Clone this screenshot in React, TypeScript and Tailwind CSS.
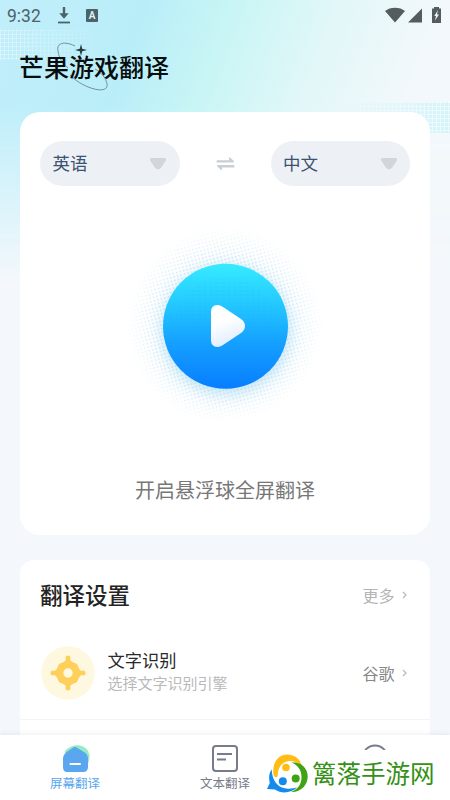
import React from "react";

function StatusBar() {
  return (
    <div className="flex h-[30px] shrink-0 items-center justify-between pt-px pl-[7px] pr-[8px] text-[#4d626a]">
      <div className="flex items-center">
        <span className="w-[50px] font-[Roboto,sans-serif] text-[17.5px] leading-[20px]">9:32</span>
        <svg width="14" height="17" viewBox="0 0 14 17" fill="none" stroke="currentColor">
          <path d="M7 0V10" strokeWidth="2.4" />
          <path d="M2.3 6.2L7 11.7L11.7 6.2Z" fill="currentColor" stroke="none" />
          <path d="M1 15.5H13" strokeWidth="1.8" />
        </svg>
        <span className="ml-[15px] flex h-[13px] w-[12px] items-center justify-center rounded-[1px] bg-[#4d626a] font-[Roboto,sans-serif] text-[10px] font-bold leading-[12px] text-[#d5f4f8]">A</span>
      </div>
      <svg width="57" height="17" viewBox="0 0 57 17" fill="#555c60">
        <path d="M0 4C5-.5 15-.5 20 4L10 15.5Z" />
        <path d="M23 15.5H37V1.5Z" />
        <path d="M49 0h5v1.5h2V16h-9V1.5h2Z" />
        <path d="M53 3L49.3 9H51L50 13.5L54 7.6H52Z" fill="#edfafa" />
      </svg>
    </div>
  );
}

function Caret() {
  return (
    <svg width="18" height="13" viewBox="0 0 18 13" fill="#d0d6da">
      <path d="M3 1H15Q18 1 16.7 3.7L12 10.7Q9 14 6 10.7L1.3 3.7Q0 1 3 1Z" />
    </svg>
  );
}

function Language({ name }: { name: string }) {
  return (
    <button className="flex h-[45px] w-[139.5px] items-center justify-between rounded-full bg-[#edf0f4] pl-[12.5px] pr-[12.5px] text-[17.5px] text-[#3b5270]">
      <span>{name}</span>
      <Caret />
    </button>
  );
}

function PlayButton() {
  return (
    <svg className="block" width="200" height="200" viewBox="0 0 200 200">
      <defs>
        <linearGradient id="disc" x1="0" y1="0" x2="0" y2="1">
          <stop stopColor="#36ebff" />
          <stop offset=".3" stopColor="#25cbff" />
          <stop offset=".65" stopColor="#149eff" />
          <stop offset="1" stopColor="#087eff" />
        </linearGradient>
        <linearGradient id="tri" x1="0" y1="0" x2=".3" y2="1">
          <stop offset=".45" stopColor="#fff" />
          <stop offset="1" stopColor="#e1edff" />
        </linearGradient>
        <radialGradient id="fade">
          <stop offset=".6" stopColor="#fff" />
          <stop offset=".8" stopColor="#fff" stopOpacity=".55" />
          <stop offset="1" stopColor="#fff" stopOpacity="0" />
        </radialGradient>
        <pattern id="dots" width="3.6" height="3.6" patternUnits="userSpaceOnUse" patternTransform="rotate(-15)">
          <circle cx="1.6" cy="1.6" r=".9" fill="#c0e2f1" />
        </pattern>
        <pattern id="grain" width="6" height="4" patternUnits="userSpaceOnUse">
          <path d="M0 2H4" stroke="#087ce5" strokeOpacity=".13" strokeWidth=".8" />
        </pattern>
        <mask id="halo"><circle cx="100" cy="100" r="99" fill="url(#fade)" /></mask>
        <filter id="glow" x="-40%" y="-40%" width="180%" height="180%"><feGaussianBlur stdDeviation="8" /></filter>
      </defs>
      <circle cx="100" cy="100" r="99" fill="url(#dots)" mask="url(#halo)" />
      <circle cx="101" cy="105" r="64" fill="#82caee" opacity=".5" filter="url(#glow)" />
      <circle cx="100.5" cy="101.3" r="62.5" fill="url(#disc)" />
      <circle cx="100.5" cy="101" r="50" fill="url(#grain)" />
      <path d="M86 87Q86 80 92.5 80Q95 80 98 82L116 94Q120 97 120 101Q120 105 116 108L98 120Q95 122 92.5 122Q86 122 86 115Z" fill="url(#tri)" />
    </svg>
  );
}

function Chevron() {
  return (
    <svg width="5" height="8" viewBox="0 0 5 8" fill="none" stroke="#bbb" strokeWidth="1.3"><path d="M1 1L4 4L1 7" /></svg>
  );
}

function TargetIcon() {
  return (
    <svg width="54" height="54" viewBox="0 0 54 54">
      <circle cx="27" cy="27" r="26.8" fill="#fff8e0" />
      <g fill="#ffcf5b">
        <path d="M25.5 12H28.5Q29 15.500 34 17Q36.500 17.500 37 20Q38.500 25 42 25.500V28.500Q38.500 29 37 34Q36.500 36.500 34 37Q29 38.500 28.500 42H25.500Q25 38.500 20 37Q17.500 36.500 17 34Q15.500 29 12 28.500V25.500Q15.500 25 17 20Q17.500 17.500 20 17Q25 15.500 25.500 12Z" />
        <circle cx="27" cy="12" r="2.5" /><circle cx="27" cy="42" r="2.5" /><circle cx="12" cy="27" r="2.5" /><circle cx="42" cy="27" r="2.5" />
      </g>
      <circle cx="27" cy="27" r="4.700" fill="#fff9df" />
    </svg>
  );
}

function Brand() {
  return (
    <div className="absolute left-[266px] top-[750px] flex h-[47px] w-[177px] items-center bg-white">
      <svg width="43" height="41" viewBox="0 0 43 41">
        <path d="M7.5 21.5C6 10 12 1.5 21 1.5C28.500 1.500 34.500 6 35.700 13C31 9.500 27.500 7.500 23 8C16 9 12 14 11.700 22.500C11.500 25 8 25 7.500 21.500Z" fill="#ffbd16" />
        <path d="M25.500 9.500C34 8.500 41.500 14 41.700 23C42 32 35 39.500 25 39C32 36 35.500 31.500 35.500 24C35.500 16.500 31.500 12 25.500 9.500Z" fill="#40a313" />
        <path d="M5.700 16.500C6 26 10.500 34.500 20 35.500C24 36 27.500 35.500 31 34.500C26 39.500 16 41.500 9 36.500L1 36L3.800 30C2.500 25 3 20 5.700 16.500Z" fill="#128bed" />
        <circle cx="20" cy="14.500" r="3.800" fill="#ffbd16" />
        <circle cx="16.800" cy="28.300" r="4" fill="#128bed" />
        <circle cx="29.700" cy="25.500" r="4" fill="#40a313" />
      </svg>
      <span className="ml-[3px] whitespace-nowrap text-[24.5px] leading-none text-[#359016]">篱落手游网</span>
    </div>
  );
}

function BottomNav() {
  return (
    <nav className="relative grid h-[65px] shrink-0 grid-cols-3 bg-white text-[12.5px] text-[#777b8a] shadow-[0_-1px_5px_rgba(50,70,90,0.09)]">
      <div className="flex flex-col items-center pt-[9px] text-[#58a5ee]">
        <svg width="30" height="29" viewBox="0 0 30 29">
          <path d="M4.500 8C8 3 14 .5 20 1.500Q28 3 29.500 11Q30 16 27 22L17 18Z" fill="#94ecc2" />
          <path d="M12.500 4Q15 2 17.500 4L25.500 9Q28 11 28 14V23Q28 28 23 28H7Q3 28 3 23V14Q3 11 6 8.500Z" fill="#5aa7ef" />
          <path d="M10.500 20H20" stroke="white" strokeWidth="2" strokeLinecap="round" />
        </svg>
        <span className="mt-px leading-[18px]">屏幕翻译</span>
      </div>
      <div className="flex flex-col items-center pt-[9px]">
        <svg width="28" height="29" viewBox="0 0 28 29" fill="none" stroke="currentColor" strokeWidth="2">
          <rect x="2" y="2" width="24" height="25" rx="3" /><path d="M6 10H21M6 15.500H15" />
        </svg>
        <span className="mt-px leading-[18px]">文本翻译</span>
      </div>
      <div className="flex justify-center pt-[9px]">
        <svg width="28" height="28" viewBox="0 0 28 28" fill="none" stroke="currentColor" strokeWidth="2"><circle cx="14" cy="14" r="12.5" /></svg>
      </div>
    </nav>
  );
}

export default function App() {
  return (
    <main className="relative flex h-[800px] w-[450px] flex-col overflow-hidden bg-[#f4f8fc] font-['Noto_Sans_CJK_SC',sans-serif]">
      <div className="absolute inset-x-0 top-0 h-[280px] bg-[linear-gradient(110deg,#c1eefb_0%,#b9eef8_27%,#c8f5f5_42%,#e2f7f8_62%,#f2f8fb_80%)] [mask-image:linear-gradient(#000_38%,transparent)]" />
      <div className="absolute left-0 top-[30px] h-[30px] w-[110px] bg-[linear-gradient(#ffffff55_1px,transparent_1px),linear-gradient(90deg,#ffffff55_1px,transparent_1px)] bg-[size:4px_4px] [mask-image:linear-gradient(90deg,#000,transparent)]" />
      <div className="absolute left-[340px] top-[102px] h-[31px] w-[110px] bg-[#d0f4f9] [mask-image:linear-gradient(90deg,transparent,#000)]">
        <div className="h-full bg-[linear-gradient(#edf9fc_1px,transparent_1px),linear-gradient(90deg,#edf9fc_1px,transparent_1px)] bg-[size:4px_4px]" />
      </div>
      <div className="relative flex min-h-0 flex-1 flex-col">
        <StatusBar />
        <header className="relative ml-[19px] h-[82px] shrink-0 pt-[16px]">
          <svg className="absolute left-[36px] top-[11px]" width="56" height="52" viewBox="0 0 56 52" fill="none">
            <path d="M20 5C8-1 1 3 3 10C4 17 7 22 13 27M15 34C27 47 54 55 52 43C51 37 46 31 40 28" stroke="#647b84" strokeWidth=".8" />
            <path d="M26 3L27.2 7.8L32 9L27.2 10.2L26 15L24.8 10.2L20 9L24.8 7.8Z" fill="#263b42" />
          </svg>
          <h1 className="relative text-[25px] font-medium leading-[40px] text-[#080d0e]">芒果游戏翻译</h1>
        </header>
        <section className="mx-[20px] flex h-[423px] shrink-0 flex-col items-center rounded-[20px] bg-white px-[20px] pt-[29px]">
          <div className="flex w-full items-center justify-between">
            <Language name="英语" />
            <svg width="19" height="15" viewBox="0 0 19 15" fill="#c9cfd2">
              <path d="M1.500 4.200H13V2Q13 .5 14.300 1.700L17.700 4.800Q18.500 6.600 17 6.600H1.500Q.5 6.600.5 5.400Q.5 4.200 1.500 4.200ZM17.500 9H2Q.5 9 1.300 10.600L4.700 13.700Q6 14.700 6 13.300V11.400H17.500Q18.500 11.400 18.500 10.200Q18.500 9 17.500 9Z" />
            </svg>
            <Language name="中文" />
          </div>
          <div className="mt-[39px]"><PlayButton /></div>
          <p className="mt-[49.5px] text-[20px] leading-[30px] text-[#777]">开启悬浮球全屏翻译</p>
        </section>
        <section className="mx-[20px] mt-[25px] h-[200px] shrink-0 rounded-t-[14px] bg-white pt-[17px]">
          <div className="flex h-[36px] items-center justify-between pl-[20px] pr-[23px]">
            <h2 className="text-[22.5px] font-medium text-[#242424]">翻译设置</h2>
            <div className="flex items-center gap-[7.5px] text-[16px] text-[#b4b4b4]">更多<Chevron /></div>
          </div>
          <div className="mt-[33px] flex h-[54px] items-center pl-[20.5px] pr-[23px]">
            <TargetIcon />
            <div className="ml-[13px] flex-1 pb-[4px]">
              <div className="text-[17.25px] leading-[24px] text-[#292929]">文字识别</div>
              <div className="text-[15px] leading-[22px] text-[#b9b9b9]">选择文字识别引擎</div>
            </div>
            <div className="flex items-center gap-[7.5px] pb-px text-[16px] text-[#888]">谷歌<Chevron /></div>
          </div>
          <div className="mt-[19px] h-px bg-[#f4f4f4]" />
        </section>
      </div>
      <BottomNav />
      <Brand />
    </main>
  );
}
